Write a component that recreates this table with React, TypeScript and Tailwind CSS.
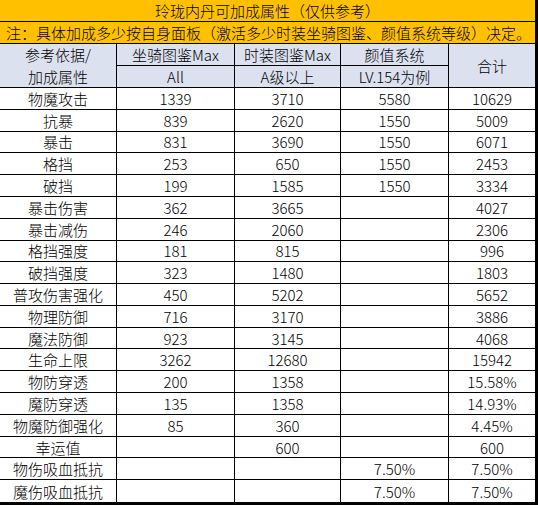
const rows: string[][] = [
  ["物魔攻击", "1339", "3710", "5580", "10629"],
  ["抗暴", "839", "2620", "1550", "5009"],
  ["暴击", "831", "3690", "1550", "6071"],
  ["格挡", "253", "650", "1550", "2453"],
  ["破挡", "199", "1585", "1550", "3334"],
  ["暴击伤害", "362", "3665", "", "4027"],
  ["暴击减伤", "246", "2060", "", "2306"],
  ["格挡强度", "181", "815", "", "996"],
  ["破挡强度", "323", "1480", "", "1803"],
  ["普攻伤害强化", "450", "5202", "", "5652"],
  ["物理防御", "716", "3170", "", "3886"],
  ["魔法防御", "923", "3145", "", "4068"],
  ["生命上限", "3262", "12680", "", "15942"],
  ["物防穿透", "200", "1358", "", "15.58%"],
  ["魔防穿透", "135", "1358", "", "14.93%"],
  ["物魔防御强化", "85", "360", "", "4.45%"],
  ["幸运值", "", "600", "", "600"],
  ["物伤吸血抵抗", "", "", "7.50%", "7.50%"],
  ["魔伤吸血抵抗", "", "", "7.50%", "7.50%"],
];

const cols = "grid grid-cols-[117px_118px_106px_108px_86px]";

export default function App() {
  return (
    <div className="h-[508px] w-[538px] bg-white font-['Noto_Sans_CJK_SC','Noto_Sans',sans-serif] text-[15px] font-light leading-none text-black">
      <div className="w-[538px] border-r-[3px] border-b-[3px] border-black">
        <div className="flex h-[22px] items-center justify-center border-b border-black bg-[#ffc000]">
          玲珑内丹可加成属性（仅供参考）
        </div>
        <div className="flex h-[22px] items-center border-b border-black bg-[#ffc000] pl-[6px]">
          注：具体加成多少按自身面板（激活多少时装坐骑图鉴、颜值系统等级）决定。
        </div>
        <div className={`${cols} h-[44px] grid-rows-2 bg-[#dce1ef]`}>
          <div className="row-span-2 flex flex-col items-center justify-center gap-[7px] border-r border-b border-black">
            <span>参考依据/</span>
            <span>加成属性</span>
          </div>
          <div className="flex items-center justify-center border-r border-b border-black">坐骑图鉴Max</div>
          <div className="flex items-center justify-center border-r border-b border-black">时装图鉴Max</div>
          <div className="flex items-center justify-center border-r border-b border-black">颜值系统</div>
          <div className="row-span-2 flex items-center justify-center border-b border-black">合计</div>
          <div className="flex items-center justify-center border-r border-b border-black">All</div>
          <div className="flex items-center justify-center border-r border-b border-black">A级以上</div>
          <div className="flex items-center justify-center border-r border-b border-black">LV.154为例</div>
        </div>
        <div className={`${cols} h-[414px] grid-rows-[repeat(19,minmax(0,1fr))]`}>
          {rows.map((row, r) =>
            row.map((cell, c) => (
              <div
                key={`${r}-${c}`}
                className={[
                  "flex items-center justify-center border-black",
                  c < 4 ? "border-r" : "",
                  r < rows.length - 1 ? "border-b" : "",
                ].join(" ")}
              >
                {cell}
              </div>
            )),
          )}
        </div>
      </div>
    </div>
  );
}
